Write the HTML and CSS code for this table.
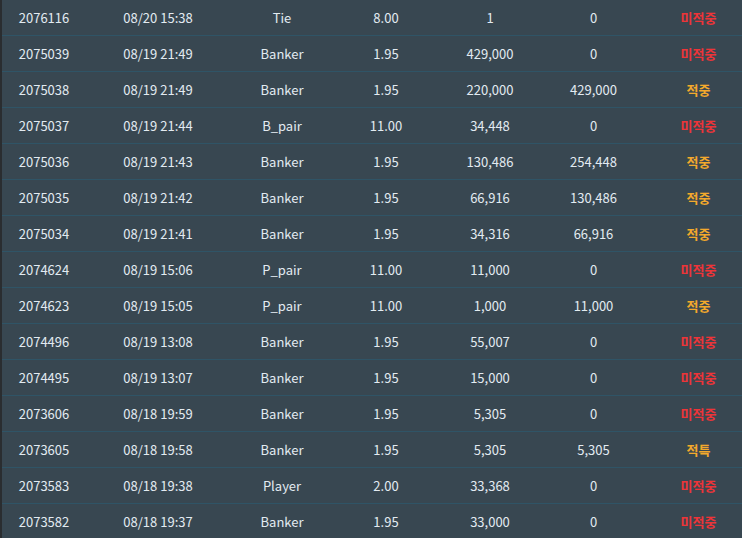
FILE: index.html
```html
<!DOCTYPE html>
<html lang="en">
<head>
  <meta charset="UTF-8" />
  <title>베팅내역</title>
  <link rel="stylesheet" href="styles.css">
</head>
<body>
  <div class="history">
    <table class="bet-table">
      <colgroup>
        <col class="c-no"><col class="c-date"><col class="c-pick"><col class="c-odds">
        <col class="c-bet"><col class="c-win"><col class="c-result">
      </colgroup>
      <tbody>
        <tr><td>2076116</td><td>08/20 15:38</td><td>Tie</td><td>8.00</td><td>1</td><td>0</td><td class="lose">미적중</td></tr>
        <tr><td>2075039</td><td>08/19 21:49</td><td>Banker</td><td>1.95</td><td>429,000</td><td>0</td><td class="lose">미적중</td></tr>
        <tr><td>2075038</td><td>08/19 21:49</td><td>Banker</td><td>1.95</td><td>220,000</td><td>429,000</td><td class="win">적중</td></tr>
        <tr><td>2075037</td><td>08/19 21:44</td><td>B_pair</td><td>11.00</td><td>34,448</td><td>0</td><td class="lose">미적중</td></tr>
        <tr><td>2075036</td><td>08/19 21:43</td><td>Banker</td><td>1.95</td><td>130,486</td><td>254,448</td><td class="win">적중</td></tr>
        <tr><td>2075035</td><td>08/19 21:42</td><td>Banker</td><td>1.95</td><td>66,916</td><td>130,486</td><td class="win">적중</td></tr>
        <tr><td>2075034</td><td>08/19 21:41</td><td>Banker</td><td>1.95</td><td>34,316</td><td>66,916</td><td class="win">적중</td></tr>
        <tr><td>2074624</td><td>08/19 15:06</td><td>P_pair</td><td>11.00</td><td>11,000</td><td>0</td><td class="lose">미적중</td></tr>
        <tr><td>2074623</td><td>08/19 15:05</td><td>P_pair</td><td>11.00</td><td>1,000</td><td>11,000</td><td class="win">적중</td></tr>
        <tr><td>2074496</td><td>08/19 13:08</td><td>Banker</td><td>1.95</td><td>55,007</td><td>0</td><td class="lose">미적중</td></tr>
        <tr><td>2074495</td><td>08/19 13:07</td><td>Banker</td><td>1.95</td><td>15,000</td><td>0</td><td class="lose">미적중</td></tr>
        <tr><td>2073606</td><td>08/18 19:59</td><td>Banker</td><td>1.95</td><td>5,305</td><td>0</td><td class="lose">미적중</td></tr>
        <tr><td>2073605</td><td>08/18 19:58</td><td>Banker</td><td>1.95</td><td>5,305</td><td>5,305</td><td class="win">적특</td></tr>
        <tr><td>2073583</td><td>08/18 19:38</td><td>Player</td><td>2.00</td><td>33,368</td><td>0</td><td class="lose">미적중</td></tr>
        <tr><td>2073582</td><td>08/18 19:37</td><td>Banker</td><td>1.95</td><td>33,000</td><td>0</td><td class="lose">미적중</td></tr>
      </tbody>
    </table>
  </div>
</body>
</html>
```

FILE: styles.css
```css
html, body {
  margin: 0;
  padding: 0;
  height: 100%;
  overflow: hidden;
  background: #384751;
}

body {
  border-left: 2px solid #2a2d30;
  font-family: "Noto Sans CJK KR", "Noto Sans", sans-serif;
  font-size: 13px;
  color: #e3ebf1;
}

.history {
  width: 750px;
}

.bet-table {
  width: 100%;
  table-layout: fixed;
  border-collapse: collapse;
}

.c-no { width: 84px; }
.c-date { width: 144px; }
.c-pick { width: 104px; }
.c-odds { width: 104px; }
.c-bet { width: 104px; }
.c-win { width: 103px; }
.c-result { width: 107px; }

.bet-table td {
  height: 35px;
  padding: 0;
  text-align: center;
  border-bottom: 1px solid #2f5466;
  white-space: nowrap;
}

.bet-table .lose {
  color: #ee3438;
  font-weight: bold;
}

.bet-table .win {
  color: #f3a92c;
  font-weight: bold;
}
```
